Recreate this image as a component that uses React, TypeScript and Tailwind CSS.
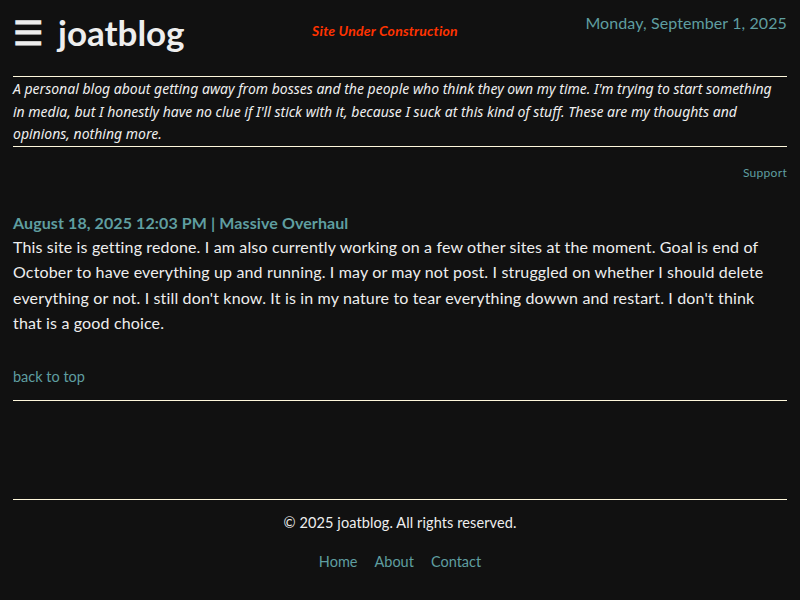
import React from "react";

export default function App() {
  return (
    <div className="min-h-[600px] bg-[#111111] text-[#eeeeee] px-[13px] font-['Lato',sans-serif]">
      <header className="flex items-start justify-between h-[76px]">
        <div className="flex items-center mt-[11px] gap-[15px]">
          <span className="text-[34px] leading-[42px] font-bold">☰</span>
          <span className="text-[35px] leading-[42px] font-bold text-[#eeeeee]">joatblog</span>
        </div>
        <div className="mt-[22px] text-[14px] leading-[18px] font-bold italic text-[#ff3300] tracking-[0.2px]">Site Under Construction</div>
        <div className="mt-[12px] text-[16px] leading-[22px] text-[#5f9ea0] tracking-[0.1px]">Monday, September 1, 2025</div>
      </header>
      <div className="border-t border-b border-[#fff8dc] pt-[1px]">
        <p className="text-[14px] leading-[22.5px] italic font-['Noto_Sans',sans-serif]">
          A personal blog about getting away from bosses and the people who think they own my time. I'm trying to start something in media, but I honestly have no clue if I'll stick with it, because I suck at this kind of stuff. These are my thoughts and opinions, nothing more.
        </p>
      </div>
      <div className="flex justify-end mt-[18px]">
        <a className="text-[12px] leading-[16px] text-[#5f9ea0] tracking-[0.3px]">Support</a>
      </div>
      <article className="mt-[32px]">
        <h2 className="text-[16px] leading-[20px] font-bold text-[#5f9ea0] tracking-[0.1px]">August 18, 2025 12:03 PM | Massive Overhaul</h2>
        <p className="text-[16px] leading-[25.5px] mt-[1px] tracking-[0.15px]">
          This site is getting redone. I am also currently working on a few other sites at the moment. Goal is end of October to have everything up and running. I may or may not post. I struggled on whether I should delete everything or not. I still don't know. It is in my nature to tear everything dowwn and restart. I don't think that is a good choice.
        </p>
      </article>
      <div className="mt-[28px]">
        <a className="text-[14.5px] leading-[20px] text-[#5f9ea0]">back to top</a>
      </div>
      <div className="border-t border-[#fff8dc] mt-[12px] h-[99px]"></div>
      <footer className="border-t border-[#fff8dc] text-center">
        <p className="text-[14.5px] leading-[20px] mt-[13px] tracking-[0.1px]">© 2025 joatblog. All rights reserved.</p>
        <nav className="flex justify-center gap-[17px] mt-[19px] text-[14.5px] leading-[20px] text-[#5f9ea0]">
          <a>Home</a>
          <a>About</a>
          <a>Contact</a>
        </nav>
      </footer>
    </div>
  );
}
